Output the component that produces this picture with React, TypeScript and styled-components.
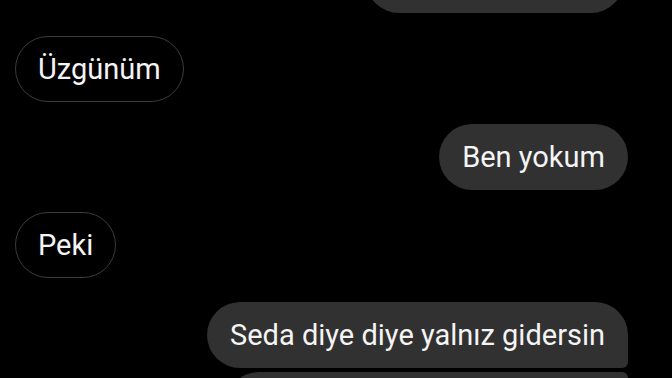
import React from "react";
import styled, { createGlobalStyle } from "styled-components";

const Global = createGlobalStyle`
  html, body {
    margin: 0;
    padding: 0;
    background: #000;
    overflow: hidden;
  }
  body {
    width: 672px;
    height: 378px;
    font-family: Roboto, "Noto Sans", "Liberation Sans", sans-serif;
  }
`;

const Screen = styled.div`
  width: 672px;
  height: 378px;
  overflow: hidden;
  background: #000;
`;

const Thread = styled.div`
  display: flex;
  flex-direction: column;
  margin-top: -53px;
  padding: 0 44px 0 15px;
`;

const Row = styled.div<{ $mine?: boolean; $gap: number }>`
  display: flex;
  justify-content: ${(p) => (p.$mine ? "flex-end" : "flex-start")};
  margin-top: ${(p) => p.$gap}px;
`;

type Pos = "single" | "first" | "last" | "middle";

const radius = (pos: Pos) => {
  switch (pos) {
    case "first":
      return "33px 33px 6px 33px";
    case "last":
      return "33px 6px 33px 33px";
    case "middle":
      return "33px 6px 6px 33px";
    default:
      return "33px";
  }
};

const Sent = styled.div<{ $pos: Pos }>`
  box-sizing: border-box;
  height: 66px;
  display: flex;
  align-items: center;
  padding: 0 23px;
  background: #313131;
  color: #f4f4f4;
  font-size: 29px;
  border-radius: ${(p) => radius(p.$pos)};
  white-space: nowrap;
`;

const Received = styled.div`
  box-sizing: border-box;
  height: 66px;
  display: flex;
  align-items: center;
  padding: 0 22px;
  border: 1.5px solid #3b3b3b;
  background: #000;
  color: #f4f4f4;
  font-size: 29px;
  border-radius: 33px;
  white-space: nowrap;
`;

const Blank = styled.span<{ $w: number }>`
  display: inline-block;
  width: ${(p) => p.$w}px;
`;

export default function App() {
  return (
    <Screen>
      <Global />
      <Thread>
        <Row $mine $gap={0} style={{ marginRight: 4 }}>
          <Sent $pos="last">
            <Blank $w={212} />
          </Sent>
        </Row>
        <Row $gap={23}>
          <Received>Üzgünüm</Received>
        </Row>
        <Row $mine $gap={22}>
          <Sent $pos="single">Ben yokum</Sent>
        </Row>
        <Row $gap={22}>
          <Received>Peki</Received>
        </Row>
        <Row $mine $gap={24}>
          <Sent $pos="first">Seda diye diye yalnız gidersin</Sent>
        </Row>
        <Row $mine $gap={4}>
          <Sent $pos="last">
            <Blank $w={356} />
          </Sent>
        </Row>
      </Thread>
    </Screen>
  );
}
